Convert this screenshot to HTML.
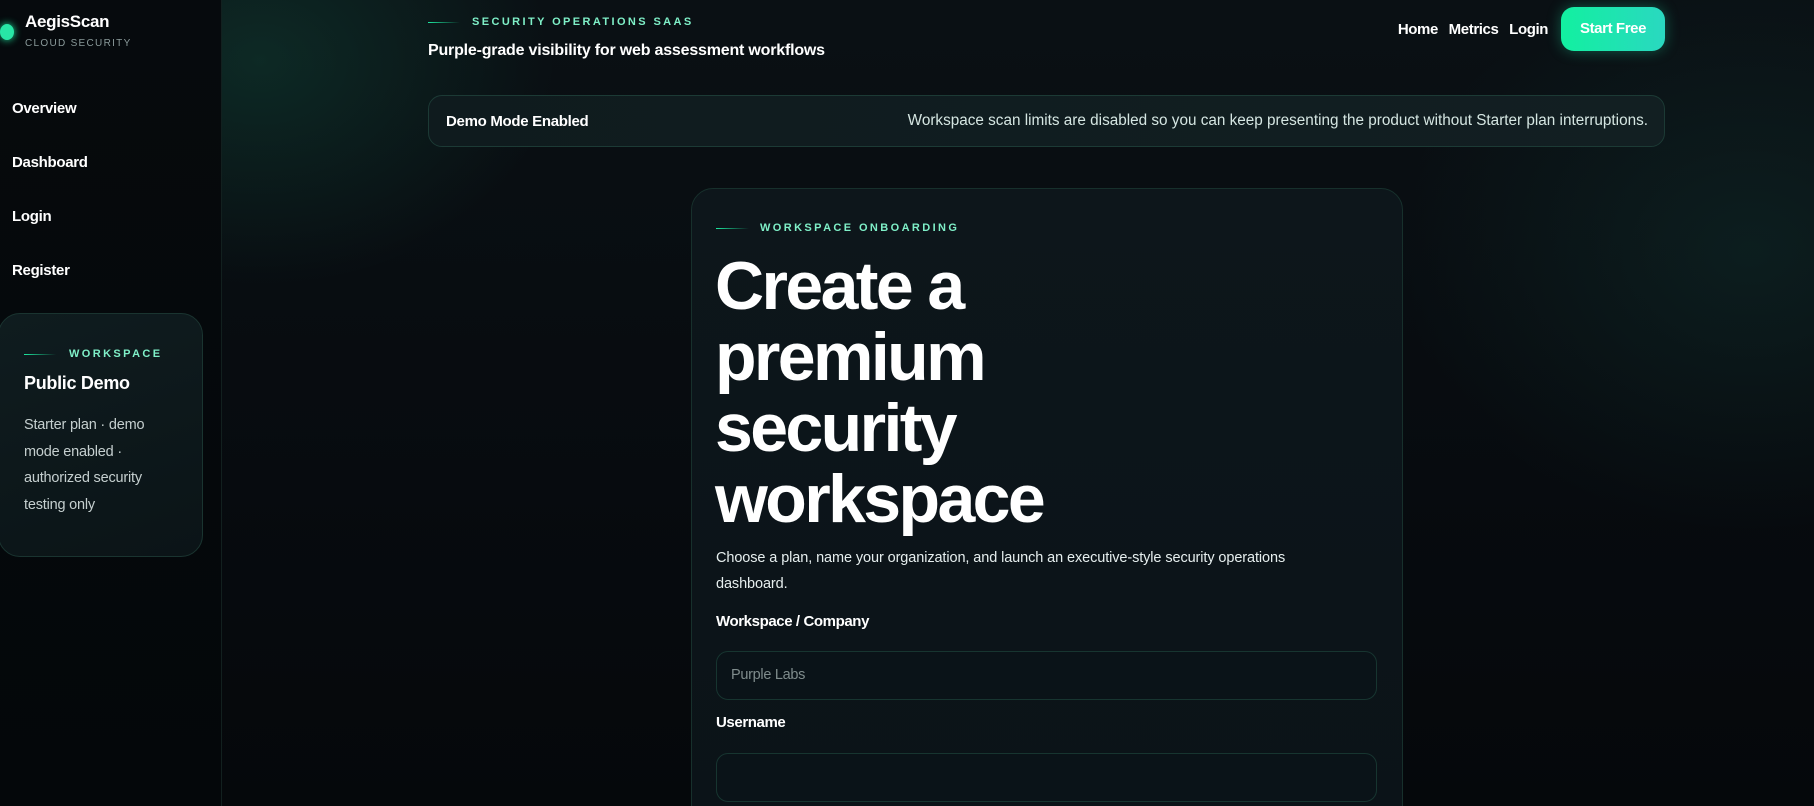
<!DOCTYPE html>
<html><head><meta charset="utf-8"><style>
*{box-sizing:border-box;margin:0;padding:0}
html,body{width:1814px;height:806px;overflow:hidden}
body{font-family:"Liberation Sans",sans-serif;color:#fff;background:#05080b;position:relative}
.bg{position:absolute;inset:0;background:
radial-gradient(ellipse 420px 320px at 260px 60px,rgba(20,90,70,.35),transparent 70%),
radial-gradient(ellipse 500px 400px at 1750px 250px,rgba(20,60,55,.35),transparent 70%),
linear-gradient(180deg,#0a1014 0%,#070b0f 60%,#05080b 100%)}
.side{position:absolute;left:0;top:0;width:222px;height:806px;background:linear-gradient(180deg,#060a0d,#04070a);border-right:1px solid #12201f}
.dot{position:absolute;left:0;top:24px;width:14px;height:16px;border-radius:50%;background:#28e6a6;box-shadow:0 0 8px #1de9a0}
.brand{position:absolute;left:25px;top:12px;font-size:17px;font-weight:bold;letter-spacing:-.3px}
.sub{position:absolute;left:25px;top:38px;font-size:10px;letter-spacing:1.3px;color:#8a9a9a}
.nav{position:absolute;left:12px;font-size:15px;font-weight:bold;letter-spacing:-.3px}
.wcard{position:absolute;left:-2px;top:313px;width:205px;height:244px;border:1px solid #1a3430;border-radius:22px;background:linear-gradient(160deg,#0f1c1f,#0b1417)}
.lab{font-size:11px;font-weight:bold;letter-spacing:2.4px;color:#7ff0c8;position:absolute}
.line{position:absolute;height:1px;background:linear-gradient(90deg,#1de9a0,transparent)}
.card{position:absolute;left:691px;top:188px;width:712px;height:640px;border:1px solid #17302c;border-radius:22px;background:linear-gradient(180deg,#0d161b,#0b1318)}
.inp{position:absolute;left:716px;width:661px;height:49px;border:1px solid #173530;border-radius:12px;background:#0a1318}
</style></head><body>
<div class="bg"></div>
<div class="side">
<div class="dot"></div>
<div class="brand">AegisScan</div>
<div class="sub">CLOUD SECURITY</div>
<div class="nav" style="top:100px">Overview</div>
<div class="nav" style="top:154px">Dashboard</div>
<div class="nav" style="top:208px">Login</div>
<div class="nav" style="top:262px">Register</div>
<div class="wcard">
<div class="line" style="left:25px;top:40px;width:32px"></div>
<div class="lab" style="left:70px;top:34px">WORKSPACE</div>
<div style="position:absolute;left:25px;top:59px;font-size:18px;font-weight:bold;letter-spacing:-.3px">Public Demo</div>
<div style="position:absolute;left:25px;top:98px;width:150px;font-size:14.5px;line-height:26.5px;color:#c5cfcf;letter-spacing:-.2px">Starter plan · demo mode enabled · authorized security testing only</div>
</div>
</div>
<div class="line" style="left:428px;top:22px;width:32px"></div>
<div class="lab" style="left:472px;top:16px">SECURITY OPERATIONS SAAS</div>
<div style="position:absolute;left:428px;top:42px;font-size:16px;font-weight:bold;letter-spacing:-.2px">Purple-grade visibility for web assessment workflows</div>
<div style="position:absolute;right:266px;top:21px;font-size:15px;font-weight:bold;letter-spacing:-.4px;word-spacing:7px">Home Metrics Login</div>
<div style="position:absolute;left:1561px;top:7px;width:104px;height:44px;border-radius:13px;background:linear-gradient(90deg,#12f0a0,#2ad8c0);box-shadow:0 0 14px rgba(30,230,170,.35);font-size:15px;font-weight:bold;text-align:center;line-height:44px;letter-spacing:-.4px">Start Free</div>
<div style="position:absolute;left:428px;top:95px;width:1237px;height:52px;border:1px solid #1c3a35;border-radius:14px;background:linear-gradient(90deg,#0f1b1e,#121f22)">
<div style="position:absolute;left:17px;top:17px;font-size:15px;font-weight:bold;letter-spacing:-.3px">Demo Mode Enabled</div>
<div style="position:absolute;right:16px;top:16px;font-size:15.3px;color:#d5e6e2;letter-spacing:0">Workspace scan limits are disabled so you can keep presenting the product without Starter plan interruptions.</div>
</div>
<div class="card"></div>
<div class="line" style="left:716px;top:228px;width:33px"></div>
<div class="lab" style="left:760px;top:222px">WORKSPACE ONBOARDING</div>
<div style="position:absolute;left:715px;top:251px;font-size:68px;line-height:71px;font-weight:bold;letter-spacing:-2.6px">Create a<br>premium<br>security<br>workspace</div>
<div style="position:absolute;left:716px;top:545px;width:615px;font-size:14.5px;line-height:26px;color:#e6eeee;letter-spacing:-.1px">Choose a plan, name your organization, and launch an executive-style security operations dashboard.</div>
<div style="position:absolute;left:716px;top:613px;font-size:15px;font-weight:bold;letter-spacing:-.4px">Workspace / Company</div>
<div class="inp" style="top:651px"><div style="position:absolute;left:14px;top:15px;font-size:14.5px;color:#7f8c8c;letter-spacing:-.3px">Purple Labs</div></div>
<div style="position:absolute;left:716px;top:714px;font-size:15px;font-weight:bold;letter-spacing:-.4px">Username</div>
<div class="inp" style="top:753px"></div>
</body></html>
